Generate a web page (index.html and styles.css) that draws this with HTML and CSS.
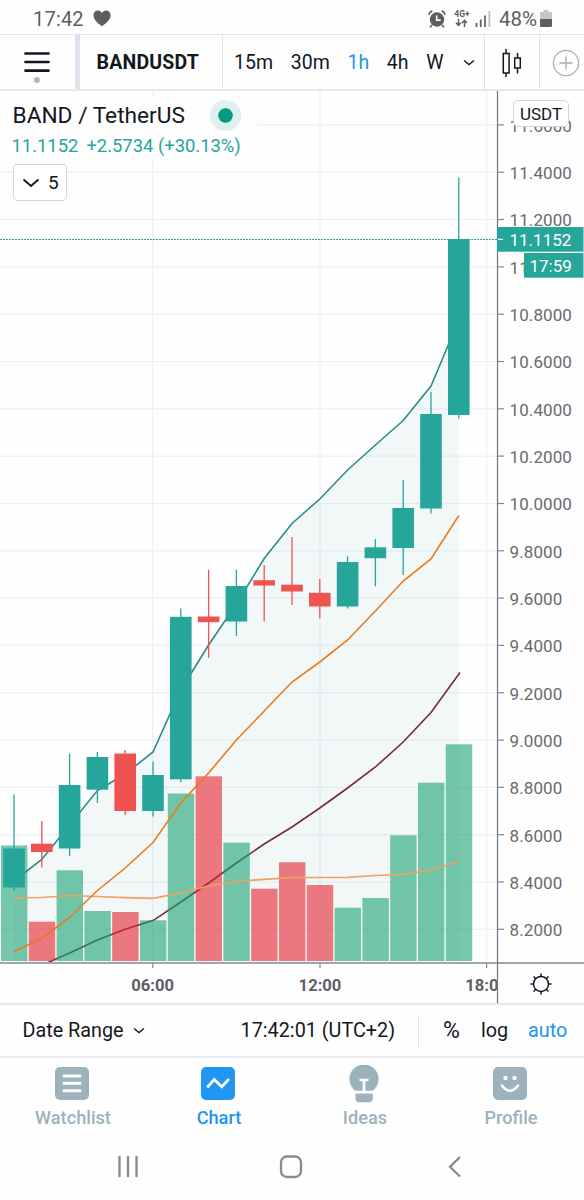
FILE: index.html
```
<!DOCTYPE html>
<html lang="en">
<head>
<meta charset="utf-8">
<title>BANDUSDT</title>
<link rel="stylesheet" href="styles.css">
</head>
<body>
<div class="screen">
  <div class="status">
    <span class="clock">17:42</span>
    <svg class="heart" width="18" height="17" viewBox="0 0 18 17"><path d="M9 16.200C5 13.400.4 9.700.4 5.300.4 2.400 2.400.5 4.800.5 6.600.5 8.200 1.500 9 3c.8-1.500 2.400-2.500 4.200-2.500 2.400 0 4.400 1.900 4.400 4.800C17.600 9.700 13 13.400 9 16.200z" fill="#5e5e5e"/></svg>
    <div class="status-right">
      <svg width="18" height="18" viewBox="0 0 18 18"><circle cx="9" cy="9.500" r="7.200" fill="#5e5e5e"/><path d="M4 15l-2 2.200M14 15l2 2.200M.8 4.700Q1.600 2 4.300.9M17.200 4.700Q16.400 2 13.700.9" stroke="#5e5e5e" stroke-width="1.700" fill="none"/><path d="M8.700 5.500v4.600h4" stroke="#fff" stroke-width="1.700" fill="none"/></svg>
      <div class="net"><span>4G+</span><svg width="13" height="8" viewBox="0 0 13 8"><path d="M3.500 0v6M1 3.700l2.500 2.700L6 3.700M9.500 8V1.700M7 4l2.500-2.700L12 4" fill="none" stroke="#5e5e5e" stroke-width="1.500"/></svg></div>
      <svg class="signal" width="16" height="16" viewBox="0 0 16 16"><path d="M1.500 12v4M5.700 8.500V16M10 4.500V16" stroke="#5e5e5e" stroke-width="1.700"/><path d="M14.400 0v16" stroke="#bcbcbc" stroke-width="1.700"/></svg>
      <span class="battery-text">48%</span>
      <svg class="battery" width="12" height="17" viewBox="0 0 12 17"><path d="M3.500 0h5v2H12v7H0V2h3.500z" fill="#c6c6c6"/><path d="M0 9h12v6.500q0 1.500-1.500 1.500h-9Q0 17 0 15.500z" fill="#5e5e5e"/></svg>
    </div>
  </div>

  <header class="toolbar">
    <div class="menu"><svg width="26" height="34" viewBox="0 0 26 34"><path d="M1.500 4.500h23M1.500 13h23M1.500 21.700h23" stroke="#131722" stroke-width="2.700" stroke-linecap="round"/><circle cx="13" cy="31" r="2.900" fill="#b2b5be"/></svg></div>
    <div class="symbol">BANDUSDT</div>
    <div class="intervals">
      <span>15m</span><span>30m</span><span class="active">1h</span><span>4h</span><span>W</span>
      <svg class="more" width="12" height="8" viewBox="0 0 12 8"><path d="M1 1.500l5 4 5-4" fill="none" stroke="#131722" stroke-width="1.400"/></svg>
    </div>
    <div class="style"><svg width="20" height="28" viewBox="0 0 20 28"><path d="M4 0v4.500M4 24v4M15.500 4v5M15.500 19v5.500" stroke="#131722" stroke-width="1.500"/><path d="M1.300 4.500h5.800v19.500H1.300zM12.700 9h5.600v10h-5.600z" fill="none" stroke="#131722" stroke-width="1.500"/></svg></div>
    <div class="compare"><svg width="28" height="28" viewBox="0 0 28 28"><circle cx="14" cy="14" r="12.600" fill="none" stroke="#acacac" stroke-width="1.300"/><path d="M14 7.500v13M7.500 14h13" stroke="#acacac" stroke-width="1.300"/></svg></div>
  </header>

  <main class="chart">
    <svg id="plot" class="plot" width="584" height="912" viewBox="0 91 584 912"></svg>
    <section class="legend">
      <div class="title"><span>BAND / TetherUS</span><i class="live"></i></div>
      <div class="quote"><span>11.1152</span><span>+2.5734 (+30.13%)</span></div>
      <div class="collapse"><svg width="18" height="12" viewBox="0 0 18 12"><path d="M1.500 2.500L9 9l7.500-6.500" fill="none" stroke="#131722" stroke-width="2"/></svg><span>5</span></div>
    </section>
    <div class="currency">USDT</div>
  </main>

  <div class="range-bar">
    <span class="range">Date Range</span>
    <svg class="range-arrow" width="12" height="8" viewBox="0 0 12 8"><path d="M1 1.500l5 4 5-4" fill="none" stroke="#131722" stroke-width="1.400"/></svg>
    <span class="time">17:42:01 (UTC+2)</span>
    <i class="divider"></i>
    <span class="pct">%</span><span class="log">log</span><span class="auto">auto</span>
  </div>

  <nav class="tabs">
    <div class="tab"><svg width="36" height="38" viewBox="0 0 36 38"><rect x="1" y="2" width="34" height="33" rx="5" fill="#9db2bd"/><path d="M10 11h16M10 18.300h16M10 25.700h16" stroke="#fff" stroke-width="3" stroke-linecap="round"/></svg><span>Watchlist</span></div>
    <div class="tab on"><svg width="36" height="38" viewBox="0 0 36 38"><rect x="1" y="2" width="34" height="33" rx="5" fill="#2196f3"/><path d="M8 21.500l6.300-7 7.400 7.300 6.600-7" fill="none" stroke="#fff" stroke-width="2.700" stroke-linecap="round"/></svg><span>Chart</span></div>
    <div class="tab"><svg width="36" height="38" viewBox="0 0 36 38"><path d="M9.300 25.800A14.600 14.600 0 1 1 26.700 25.800z" fill="#9db2bd"/><path d="M9.500 28.500h17.300v5q0 3.700-3.700 3.700h-10q-3.600 0-3.600-3.700z" fill="#9db2bd"/><path d="M13.500 15h9M18 15v11" stroke="#fff" stroke-width="2.600"/></svg><span>Ideas</span></div>
    <div class="tab"><svg width="36" height="38" viewBox="0 0 36 38"><rect x="1" y="2" width="34" height="33" rx="5" fill="#9db2bd"/><circle cx="13.500" cy="13" r="2.200" fill="#fff"/><circle cx="22.500" cy="13" r="2.200" fill="#fff"/><path d="M10 20.500q8 10.500 16 0" fill="none" stroke="#fff" stroke-width="2.600" stroke-linecap="round"/></svg><span>Profile</span></div>
  </nav>

  <div class="system">
    <svg width="22" height="24" viewBox="0 0 22 24"><path d="M2.500 2v19M11 2v19M19.500 2v19" stroke="#8b8b8b" stroke-width="2.400" stroke-linecap="round"/></svg>
    <svg width="24" height="24" viewBox="0 0 24 24"><rect x="2" y="1.500" width="20" height="20.500" rx="6" fill="none" stroke="#8b8b8b" stroke-width="2.300"/></svg>
    <svg width="16" height="24" viewBox="0 0 16 24"><path d="M13 2L3 11.700 13 21.500" fill="none" stroke="#8b8b8b" stroke-width="2.300"/></svg>
  </div>
</div>
<script src="chart.js"></script>
</body>
</html>
```
FILE: styles.css
```
* { box-sizing: border-box; }
body { margin: 0; background: #fff; font-family: Roboto, "Liberation Sans", sans-serif; color: #131722; }
svg { display: block; flex: none; }
span { white-space: nowrap; }
.screen { width: 584px; height: 1200px; overflow: hidden; background: #fefefe; display: flex; flex-direction: column; }

.status { height: 34px; flex: none; display: flex; align-items: center; padding: 3px 31px 0 33px; color: #5e5e5e; }
.clock { font-size: 20px; letter-spacing: 0.2px; }
.heart { margin-left: 9px; }
.status-right { margin-left: auto; display: flex; align-items: center; }
.net { width: 18px; margin-left: 7px; display: flex; flex-direction: column; align-items: center; font-size: 8.500px; font-weight: 700; line-height: 9px; }
.signal { margin-left: 4px; }
.battery-text { margin-left: 8px; font-size: 20.500px; }
.battery { margin-left: 3px; margin-right: 1px; }

.toolbar { height: 57px; flex: none; display: flex; border-top: 1px solid #e4e5eb; border-bottom: 2px solid #e6e8ed; }
.toolbar > div { display: flex; align-items: center; height: 100%; }
.menu { width: 80px; border-right: 5px solid #e0e1eb; padding: 7px 0 0 24px; }
.symbol { width: 143px; border-right: 1px solid #e0e3eb; padding: 1px 0 0 16.500px; font-weight: 700; font-size: 19.500px; letter-spacing: 0.2px; }
.intervals { width: 262px; border-right: 1px solid #e0e3eb; padding: 1px 0 0 11px; gap: 17.700px; font-size: 19.500px; }
.intervals .active { color: #2196f3; }
.more { margin-left: 2px; }
.style { width: 55px; border-right: 1px solid #e0e3eb; padding: 1px 0 0 17px; }
.compare { width: 44px; padding-left: 12px; padding-top: 1px; }

.chart { position: relative; height: 912px; flex: none; }
.plot { font-family: Roboto, "Liberation Sans", sans-serif; }
.legend { position: absolute; left: 0; top: 7px; width: 258px; }
.title { display: flex; align-items: center; justify-content: space-between; height: 34px; padding-left: 12.500px; padding-right: 17px; font-size: 22.700px; background: #fefefe; }
.live { width: 31px; height: 31px; border-radius: 50%; border: 8px solid #ddf1ee; background: #089981; background-clip: padding-box; }
.quote { display: flex; gap: 8px; width: 248px; height: 27px; align-items: center; padding-left: 11.500px; font-size: 18.400px; color: #26a69a; background: #fefefe; }
.collapse { width: 54px; height: 37px; margin: 5px 0 0 13px; border: 1.500px solid #d1d4dc; border-radius: 4px; background: #fff; display: flex; align-items: center; gap: 8px; padding-left: 8px; font-size: 19px; }
.currency { position: absolute; left: 513px; top: 9px; width: 56px; height: 27px; border: 1px solid #d1d4dc; border-radius: 5px; background: #fff; display: flex; align-items: center; justify-content: center; font-size: 17px; }

.grid { stroke: #edf0f5; stroke-width: 1.200; }
.axis-label { fill: #686a70; font-size: 17px; letter-spacing: 0.1px; }
.time-label { fill: #5d6068; font-size: 16.600px; font-weight: 700; text-anchor: middle; }
.badge-label { fill: #fff; font-size: 17px; }

.range-bar { height: 55px; flex: none; border-top: 2px solid #e4e7eb; border-bottom: 2px solid #eceef1; display: flex; align-items: center; padding-left: 22.500px; font-size: 19.800px; }
.range-arrow { margin-left: 9px; }
.time { margin-left: 96px; }
.divider { width: 1px; height: 32px; background: #dcdfe6; margin-left: 23px; }
.pct { margin-left: 24px; font-size: 23px; }
.log { margin-left: 21px; }
.auto { margin-left: 20px; color: #2196f3; }

.tabs { height: 74px; flex: none; display: flex; padding-top: 7px; }
.tab { width: 146px; display: flex; flex-direction: column; align-items: center; font-size: 18.200px; font-weight: 500; color: #9db2bd; }
.tab svg { margin-right: 2px; }
.tab span { margin-top: 4px; }
.tab.on { color: #2196f3; }
.system { display: flex; padding: 23px 121px 0 117px; justify-content: space-between; }
.system svg:nth-child(2) { margin-right: 4px; }
```
FILE: chart.js
```
const X0 = 14, PITCH = 27.8, BODY = 21.6;
const cx = i => X0 + i * PITCH;
const UP = '#26a69a', DOWN = '#ef5350';

// [high, body top, body bottom, low, direction, volume top]
const bars = [
  [794.500, 848.500, 887.500, 891, 1, 845.500],
  [821, 843.700, 852, 867.500, 0, 921.700],
  [753.500, 785, 848.500, 856, 1, 870.300],
  [752, 757, 789.700, 803, 1, 911],
  [750, 753.500, 811, 815, 0, 912],
  [761.500, 775, 811, 816.500, 1, 920.300],
  [608.500, 616.800, 779.300, 782.500, 1, 793.500],
  [569.700, 616.500, 622.200, 657.700, 0, 776.300],
  [569.700, 586, 621.500, 636, 1, 842.700],
  [565, 580.200, 585.500, 621.500, 0, 888.700],
  [537, 584.700, 591.500, 605, 0, 862.200],
  [579, 592.800, 606.500, 618.500, 0, 885],
  [556.300, 562, 606.500, 608.500, 1, 907.700],
  [539, 547.300, 558.200, 586.300, 1, 898],
  [480, 508, 548, 575, 1, 835.300],
  [392, 414, 508.500, 513.500, 1, 782.700],
  [177.500, 239, 415, 418.500, 1, 744.300]
];
const upper = [881, 859.500, 825, 790.500, 774, 752, 690, 645, 604, 558.500, 523.500, 499, 470, 445, 420.500, 386, 320];
const basis = [951.500, 938.500, 917.500, 890.500, 868, 842.500, 803, 773, 740, 711, 682, 662, 640, 611, 581, 559, 515.500];
const lowerPts = [[48, 962.500], [69.600, 953], [97.400, 940], [125.200, 929.300], [153.500, 920.300], [180.800, 902], [208.600, 883], [236.400, 863], [264.200, 844], [292, 827], [319.800, 808], [347.600, 788], [375.400, 767], [403.200, 742], [431, 712.500], [460, 672.500]];
const volMa = [898, 897.500, 895.500, 896.500, 897.700, 898.300, 893, 886, 881.500, 879.300, 877.700, 877.500, 877.300, 875.500, 874.300, 870, 861.500];

const line = a => a.map((y, i) => `${cx(i).toFixed(1)},${y}`).join(' ');
const poly = (pts, color, w) => `<polyline points="${pts}" fill="none" stroke="${color}" stroke-width="${w}"/>`;
let out = '';

out += '<clipPath id="pane"><rect x="0" y="91" width="497" height="871"/></clipPath>';
out += '<clipPath id="times"><rect x="0" y="963" width="497" height="40"/></clipPath>';
for (let k = 0; k < 18; k++) {
  const y = (124.900 + k * 47.320).toFixed(1);
  out += `<line class="grid" x1="0" x2="497" y1="${y}" y2="${y}"/>`;
}
for (const x of [152.700, 320, 486.600]) out += `<line class="grid" x1="${x}" x2="${x}" y1="91" y2="962"/>`;

out += '<g clip-path="url(#pane)">';
out += `<polygon points="${line(upper)} 458.8,962 14,962" fill="#199090" fill-opacity="0.05"/>`;
out += poly(line(upper), '#2b8c86', 1.600);
out += poly(lowerPts.map(p => p.join(',')).join(' '), '#732b3c', 1.600);
bars.forEach((b, i) => {
  out += `<rect x="${(cx(i) - 13).toFixed(1)}" y="${b[5]}" width="26.400" height="${(961 - b[5]).toFixed(1)}" fill="${b[4] ? '#19a373' : '#e6232e'}" fill-opacity="0.6"/>`;
});
out += poly(line(volMa), '#f2a062', 1.700);
out += poly(line(basis), '#ec7a1c', 1.600);
bars.forEach((b, i) => {
  const c = b[4] ? UP : DOWN, x = cx(i);
  out += `<line x1="${x}" x2="${x}" y1="${b[0]}" y2="${b[3]}" stroke="${c}" stroke-width="1.300"/>`;
  out += `<rect x="${(x - BODY / 2).toFixed(1)}" y="${b[1]}" width="${BODY}" height="${(b[2] - b[1]).toFixed(1)}" fill="${c}"/>`;
});
out += '</g>';
out += '<line x1="0" x2="497" y1="239.500" y2="239.500" stroke="#26a69a" stroke-width="1.200" stroke-dasharray="2 1"/>';

// Axes
out += '<path d="M0 963h584" stroke="#85878c" stroke-width="1.700"/><path d="M497.500 91v912" stroke="#72757f" stroke-width="1.200"/>';
for (let k = 0; k < 18; k++) {
  const y = 124.900 + k * 47.320;
  out += `<path d="M498 ${y.toFixed(1)}h6" stroke="#85878c" stroke-width="1.200"/>`;
  out += `<text class="axis-label" x="509.500" y="${(y + 6.900).toFixed(1)}">${(11.6 - k * 0.2).toFixed(4)}</text>`;
}
out += '<g clip-path="url(#times)">';
[['06:00', 152.700], ['12:00', 320], ['18:00', 486.600]].forEach(([t, x]) => {
  out += `<path d="M${x} 963v5" stroke="#85878c" stroke-width="1.200"/><text class="time-label" x="${x}" y="991">${t}</text>`;
});
out += '</g>';

// Last price and bar countdown
out += '<rect x="497" y="227" width="86.500" height="24.700" fill="#26a69a"/><path d="M498 239.300h5" stroke="#fff" stroke-width="1.200"/><text class="badge-label" x="509.500" y="245.700">11.1152</text>';
out += '<rect x="524" y="253" width="59.500" height="24.700" fill="#26a69a"/><text class="badge-label" x="529.500" y="271.500">17:59</text>';

// Scale settings
out += '<g transform="translate(541 984)" fill="none" stroke="#131722" stroke-width="1.500"><circle r="7.500"/>';
for (let a = 0; a < 360; a += 45) out += `<path d="M0-7.500v-3" transform="rotate(${a})"/>`;
out += '</g>';

document.getElementById('plot').innerHTML = out;
```
